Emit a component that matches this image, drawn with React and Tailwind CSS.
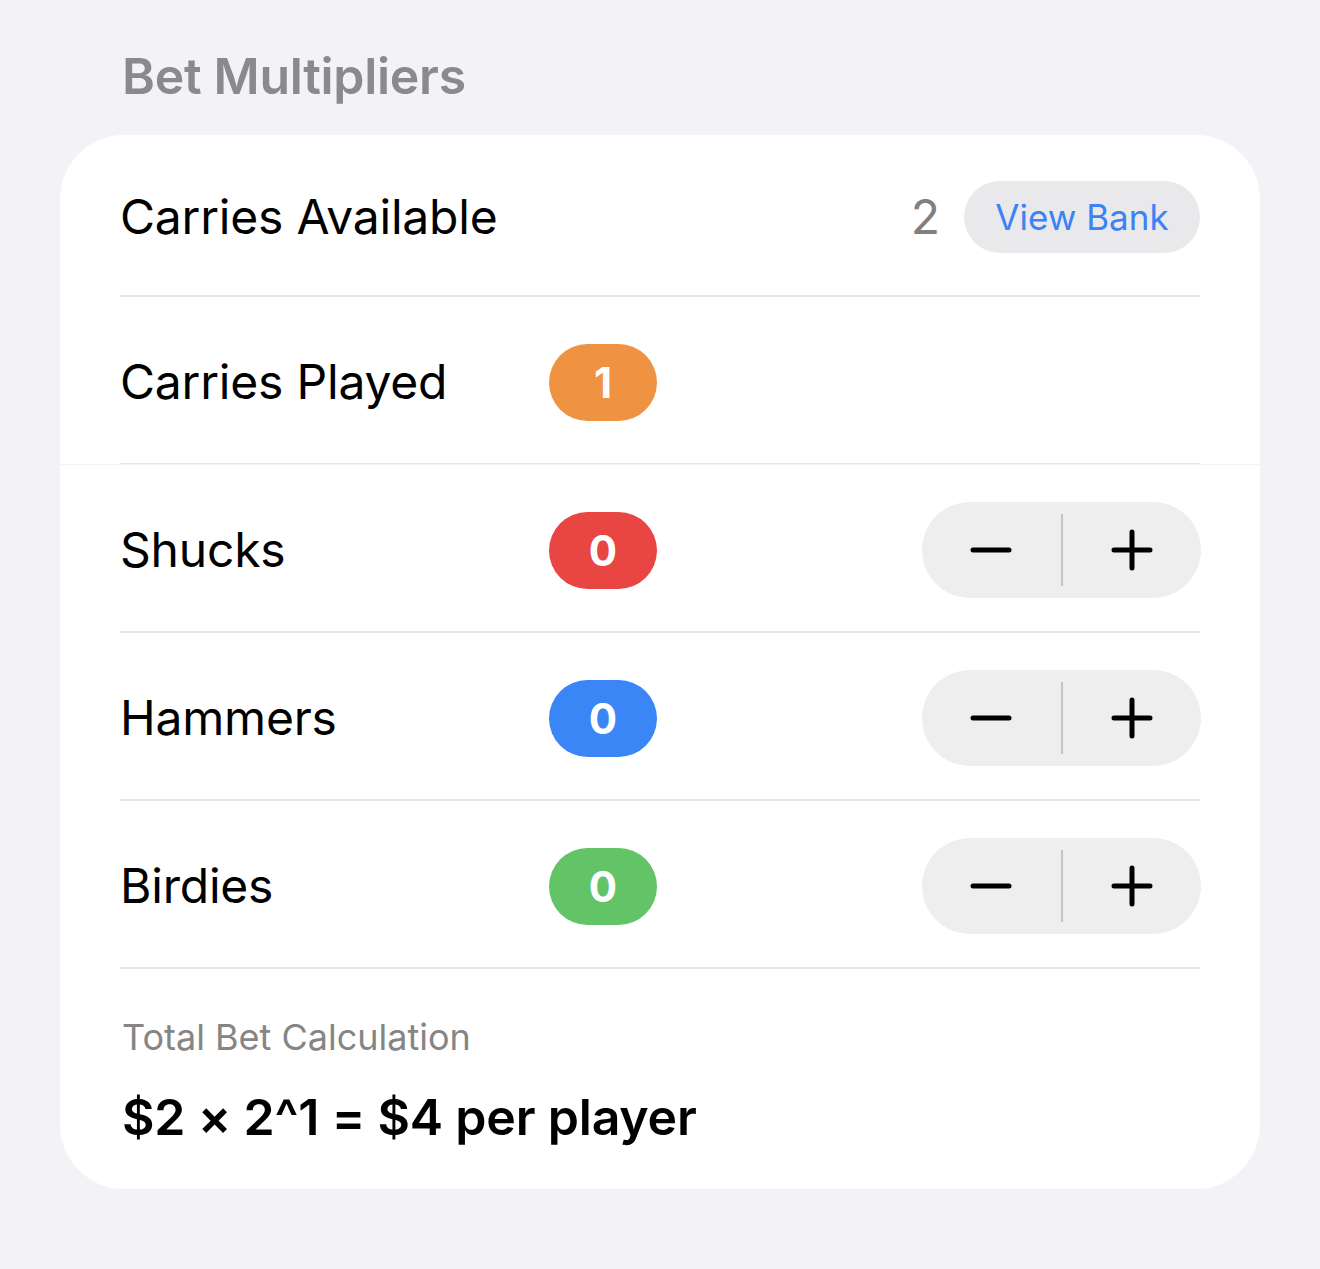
import React, { useState } from "react";

const BADGE = {
  orange: "bg-[#ef9343]",
  red: "bg-[#e94543]",
  blue: "bg-[#3a86f6]",
  green: "bg-[#62c466]",
};

function Badge({ value, color }) {
  return (
    <div
      className={`ml-px w-[108px] h-[77px] rounded-full flex items-center justify-center text-white font-bold text-[42px] ${BADGE[color]}`}
    >
      {value}
    </div>
  );
}

function Stepper({ onMinus, onPlus }) {
  return (
    <div className="w-[279px] h-[96px] -mr-px rounded-full bg-[#eeeeef] flex items-center">
      <button onClick={onMinus} className="flex-1 h-full flex items-center justify-center cursor-pointer">
        <svg width="42" height="10" viewBox="0 0 42 10">
          <path d="M3 5h36" stroke="#000" strokeWidth="5" strokeLinecap="round" />
        </svg>
      </button>
      <div className="w-[2px] h-[72px] bg-[#c4c4c6]" />
      <button onClick={onPlus} className="flex-1 h-full flex items-center justify-center cursor-pointer">
        <svg width="42" height="42" viewBox="0 0 42 42">
          <path d="M3 21h36M21 3v36" stroke="#000" strokeWidth="5" strokeLinecap="round" />
        </svg>
      </button>
    </div>
  );
}

function Row({ label, children, right, divider = true, tall = true }) {
  return (
    <div className="px-[60px]">
      <div className={`flex items-center pt-[4px] ${tall ? "h-[168px]" : "h-[162px]"} ${divider ? "border-b-2 border-[#e6e6e8]" : ""}`}>
        <span className="w-[428px] text-[48px] text-black tracking-[-0.2px]">{label}</span>
        {children}
        <div className="ml-auto flex items-center">{right}</div>
      </div>
    </div>
  );
}

export default function App() {
  const [counts, setCounts] = useState({ shucks: 0, hammers: 0, birdies: 0 });

  const bump = (key, d) =>
    setCounts((c) => ({ ...c, [key]: Math.max(0, c[key] + d) }));

  return (
    <div
      className="min-h-[1269px] w-[1320px] bg-[#f2f2f7] px-[60px] pt-[46px]"
      style={{ fontFamily: "Inter, 'Noto Sans', sans-serif" }}
    >
      <h2 className="pl-[62px] text-[50px] font-semibold text-[#8a8a8e] leading-[60px] tracking-[-0.3px]">
        Bet Multipliers
      </h2>

      <div className="mt-[29px] bg-white rounded-[64px] overflow-hidden">
        <Row
          label="Carries Available"
          tall={false}
          right={
            <>
              <span className="text-[48px] text-[#808080] mr-[24px]">2</span>
              <button className="w-[236px] h-[72px] rounded-full bg-[#e9e9eb] text-[#3b82f6] text-[35px] cursor-pointer">
                View Bank
              </button>
            </>
          }
        />
        <Row label="Carries Played" divider>
          <Badge value={1} color="orange" />
        </Row>
        <div className="h-px bg-[#f3f3f5] -mt-[1px]" />
        <Row label="Shucks" right={<Stepper onMinus={() => bump("shucks", -1)} onPlus={() => bump("shucks", 1)} />}>
          <Badge value={counts.shucks} color="red" />
        </Row>
        <Row label="Hammers" right={<Stepper onMinus={() => bump("hammers", -1)} onPlus={() => bump("hammers", 1)} />}>
          <Badge value={counts.hammers} color="blue" />
        </Row>
        <Row label="Birdies" right={<Stepper onMinus={() => bump("birdies", -1)} onPlus={() => bump("birdies", 1)} />}>
          <Badge value={counts.birdies} color="green" />
        </Row>

        <div className="px-[62px] pt-[47px] pb-[43px]">
          <p className="text-[36px] text-[#858585] leading-[42px]">Total Bet Calculation</p>
          <p className="mt-[30px] text-[50px] font-semibold text-black leading-[58px] tracking-[-0.2px]">
            $2 × 2^1 = $4 per player
          </p>
        </div>
      </div>
    </div>
  );
}
